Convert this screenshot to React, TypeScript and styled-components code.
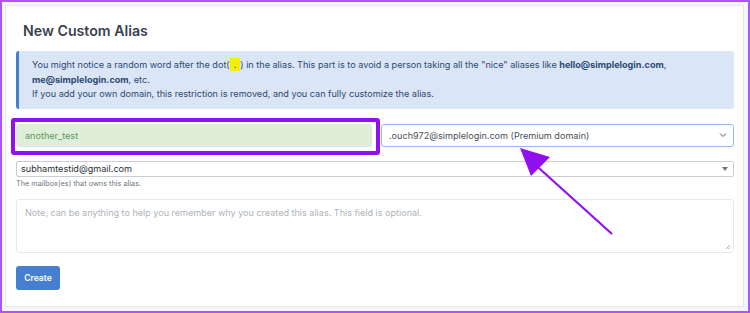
import React from "react";
import styled, { createGlobalStyle } from "styled-components";

const GlobalStyle = createGlobalStyle`
  html, body {
    margin: 0;
    padding: 0;
    background: #ffffff;
  }
  body {
    font-family: Inter, "Noto Sans", "Liberation Sans", sans-serif;
  }
  * {
    box-sizing: border-box;
  }
`;

const Frame = styled.div`
  position: relative;
  width: 750px;
  height: 313px;
  border: 2px solid #ad55f4;
  background: #f4f6fa;
  padding: 3px 4px 4px 3px;
`;

const Card = styled.div`
  height: 100%;
  background: #ffffff;
  border: 1px solid #e3e8ef;
  padding: 0 9px 0 10px;
  display: flex;
  flex-direction: column;
`;

const Title = styled.h3`
  margin: 0;
  padding: 16px 0 0 7px;
  height: 45px;
  font-size: 14.2px;
  line-height: 18px;
  font-weight: 600;
  color: #3a414d;
`;

const Alert = styled.div`
  background: #dae5f5;
  border-left: 3px solid #467fcf;
  border-radius: 3px;
  padding: 7px 12px 7px 13px;
  font-size: 9.1px;
  line-height: 14.5px;
  color: #2c4a73;
`;

const Dot = styled.span`
  background: #f4f000;
  padding: 1px 4px;
`;

const Row = styled.div`
  display: flex;
  gap: 9px;
  margin-top: 15px;
`;

const Field = styled.div<{ $tone: "valid" | "focus" }>`
  flex: ${(p) => (p.$tone === "valid" ? "0 0 356px" : "1")};
  height: 23px;
  display: flex;
  align-items: center;
  justify-content: space-between;
  padding: 0 6px 0 ${(p) => (p.$tone === "valid" ? "8px" : "7px")};
  border-radius: 3px;
  font-size: 9.1px;
  background: ${(p) => (p.$tone === "valid" ? "#dfeed9" : "#ffffff")};
  border: 1px solid ${(p) => (p.$tone === "valid" ? "#dcebd5" : "#8dbdf0")};
  color: ${(p) => (p.$tone === "valid" ? "#5d9a5c" : "#495057")};
`;

const Mailbox = styled.div`
  margin-top: 14px;
  height: 16px;
  border: 1px solid #c9ced4;
  border-radius: 2px;
  display: flex;
  align-items: center;
  justify-content: space-between;
  padding: 0 5px 0 4px;
  font-size: 9.1px;
  color: #2b2f34;
`;

const Caret = styled.span`
  width: 0;
  height: 0;
  border-left: 3px solid transparent;
  border-right: 3px solid transparent;
  border-top: 4px solid #777;
`;

const Help = styled.div`
  margin-top: 2px;
  font-size: 7.3px;
  line-height: 10px;
  color: #6e757c;
`;

const Note = styled.div`
  position: relative;
  margin-top: 10px;
  height: 54px;
  border: 1px solid #e6eaef;
  border-radius: 3px;
  padding: 7px 8px;
  font-size: 9.05px;
  color: #aeb3b9;
`;

const Grip = styled.svg`
  position: absolute;
  right: 2px;
  bottom: 2px;
`;

const Button = styled.button`
  margin-top: 13px;
  align-self: flex-start;
  width: 44px;
  height: 24px;
  border: none;
  border-radius: 3px;
  background: #467fcf;
  color: #ffffff;
  font-family: inherit;
  font-size: 8.5px;
  font-weight: 600;
  padding: 0;
`;

const Highlight = styled.div`
  position: absolute;
  left: 9px;
  top: 116px;
  width: 369px;
  height: 37px;
  border: 4px solid #9210f0;
  border-radius: 3px;
  pointer-events: none;
`;

const Arrow = styled.svg`
  position: absolute;
  left: 0;
  top: 0;
  pointer-events: none;
`;

export default function App() {
  return (
    <>
      <GlobalStyle />
      <Frame>
        <Card>
          <Title>New Custom Alias</Title>
          <Alert>
            You might notice a random word after the dot(<Dot>.</Dot>) in the
            alias. This part is to avoid a person taking all the "nice" aliases
            like <b>hello@simplelogin.com</b>,<br />
            <b>me@simplelogin.com</b>, etc.
            <br />
            If you add your own domain, this restriction is removed, and you
            can fully customize the alias.
          </Alert>
          <Row>
            <Field $tone="valid">another_test</Field>
            <Field $tone="focus">
              .ouch972@simplelogin.com (Premium domain)
              <svg width="8" height="6" viewBox="0 0 8 6">
                <path d="M1 1.5 L4 4.5 L7 1.5" fill="none" stroke="#555" strokeWidth="1" />
              </svg>
            </Field>
          </Row>
          <Mailbox>
            subhamtestid@gmail.com
            <Caret />
          </Mailbox>
          <Help>The mailbox(es) that owns this alias.</Help>
          <Note>
            Note, can be anything to help you remember why you created this
            alias. This field is optional.
            <Grip width="6" height="6" viewBox="0 0 6 6">
              <path d="M1 5 L5 1 M3.5 5 L5 3.5" stroke="#999" strokeWidth="0.8" />
            </Grip>
          </Note>
          <Button>Create</Button>
        </Card>
        <Highlight />
        <Arrow width="750" height="313" viewBox="0 0 750 313">
          <line x1="610" y1="232" x2="528" y2="158" stroke="#9210f0" strokeWidth="2.2" />
          <polygon points="518,146 548,155 529,174" fill="#9210f0" />
        </Arrow>
      </Frame>
    </>
  );
}
